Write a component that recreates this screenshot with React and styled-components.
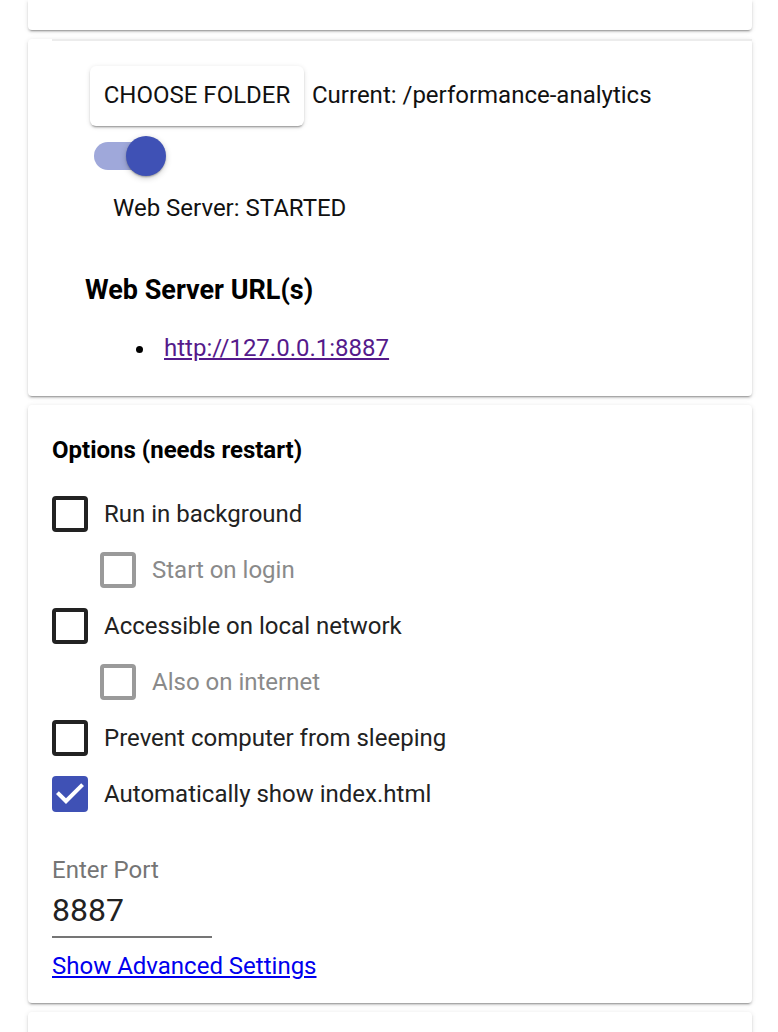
import styled, { createGlobalStyle } from 'styled-components';

const GlobalStyle = createGlobalStyle`
  body {
    margin: 0;
    background: #fff;
    font-family: Roboto, "Liberation Sans", sans-serif;
    color: rgba(0, 0, 0, 0.87);
  }
`;

const Page = styled.div`
  display: flex;
  flex-direction: column;
  gap: 9px;
  padding: 0 26px 0 28px;
  height: 1032px;
  overflow: hidden;
`;

const Card = styled.div`
  flex-shrink: 0;
  background: #fff;
  border-radius: ${p => (p.$cut ? '0 0 4px 4px' : '4px')};
  box-shadow: 0 3px 1px -2px rgba(0, 0, 0, 0.2), 0 2px 2px 0 rgba(0, 0, 0, 0.14),
    0 1px 5px 0 rgba(0, 0, 0, 0.12);
  height: ${p => p.$h || 'auto'};
  box-sizing: border-box;
`;

const ServerCard = styled(Card)`
  padding: 27px 0 0;
  position: relative;
  &::before {
    content: '';
    position: absolute;
    top: 0;
    left: 24px;
    right: 0;
    height: 2px;
    background: #ececec;
  }
`;

const FolderRow = styled.div`
  display: flex;
  align-items: center;
  gap: 8px;
  padding-left: 62px;
`;

const FolderButton = styled.button`
  width: 214px;
  height: 60px;
  padding: 0 0 3px;
  border: none;
  border-radius: 6px;
  background: #fff;
  font-family: inherit;
  font-size: 24px;
  color: #111;
  box-shadow: 0 3px 1px -2px rgba(0, 0, 0, 0.2), 0 2px 2px 0 rgba(0, 0, 0, 0.14),
    0 1px 5px 0 rgba(0, 0, 0, 0.12);
`;

const Plain = styled.span`
  font-size: 24px;
  line-height: 28px;
  margin-top: -3px;
  color: #111;
`;

const SwitchWrap = styled.div`
  position: relative;
  margin: 10px 0 0 66px;
  width: 72px;
  height: 40px;
`;

const Track = styled.div`
  position: absolute;
  left: 0;
  top: 6px;
  width: 64px;
  height: 28px;
  border-radius: 14px;
  background: #9fa8da;
`;

const Thumb = styled.div`
  position: absolute;
  left: 32px;
  top: 0;
  width: 40px;
  height: 40px;
  border-radius: 50%;
  background: #3f51b5;
  box-shadow: 0 2px 2px -1px rgba(0, 0, 0, 0.2), 0 1px 2px 0 rgba(0, 0, 0, 0.14),
    0 2px 6px 0 rgba(0, 0, 0, 0.2);
`;

const Status = styled.div`
  margin-top: 18px;
  padding-left: 85px;
  font-size: 24px;
  line-height: 28px;
  color: #111;
`;

const UrlHeading = styled.h3`
  margin: 52px 0 0;
  padding-left: 57px;
  font-size: 27px;
  line-height: 32px;
  font-weight: 700;
  color: #000;
`;

const UrlList = styled.ul`
  list-style: none;
  margin: 28px 0 0;
  padding-left: 108px;
  font-size: 24px;
  line-height: 28px;
`;

const UrlItem = styled.li`
  display: flex;
  align-items: center;
  gap: 21px;
  &::before {
    content: '';
    width: 7px;
    height: 7px;
    border-radius: 50%;
    background: #000;
    margin-top: 2px;
  }
`;

const UrlLink = styled.a`
  color: #551a8b;
  text-decoration: underline;
`;

const OptionsCard = styled(Card)`
  padding: 31px 24px 0;
`;

const OptionsTitle = styled.div`
  font-size: 24px;
  line-height: 28px;
  font-weight: 700;
  color: #000;
  margin-bottom: 32px;
`;

const CheckList = styled.div`
  display: flex;
  flex-direction: column;
  gap: 20px;
`;

const CheckRow = styled.label`
  display: flex;
  align-items: center;
  gap: 16px;
  padding-left: ${p => (p.$sub ? '48px' : '0')};
  font-size: 24px;
  line-height: 28px;
  color: ${p => (p.$disabled ? '#8a8a8a' : '#222')};
`;

const Box = styled.span`
  width: 36px;
  height: 36px;
  box-sizing: border-box;
  border-radius: 4px;
  border: ${p => (p.$checked ? 'none' : `4px solid ${p.$disabled ? '#9a9a9a' : '#222'}`)};
  background: ${p => (p.$checked ? '#3f51b5' : 'transparent')};
  display: flex;
  align-items: center;
  justify-content: center;
  flex-shrink: 0;
`;

const PortField = styled.div`
  margin-top: 44px;
  width: 160px;
`;

const PortLabel = styled.div`
  font-size: 24px;
  line-height: 28px;
  color: #757575;
`;

const PortValue = styled.div`
  margin-top: 8px;
  font-size: 32px;
  line-height: 36px;
  color: #222;
  padding-bottom: 8px;
  border-bottom: 2px solid #757575;
`;

const AdvancedLink = styled.a`
  display: inline-block;
  margin-top: 14px;
  font-size: 24px;
  line-height: 28px;
  color: #0000ee;
  text-decoration: underline;
`;

function Check({ label, checked, disabled, sub }) {
  return (
    <CheckRow $sub={sub} $disabled={disabled}>
      <Box $checked={checked} $disabled={disabled}>
        {checked && (
          <svg width="36" height="36" viewBox="3 3 18 18">
            <path d="M10 17l-5-5 1.41-1.41L10 14.17l7.59-7.59L19 8l-9 9z" fill="#fff" />
          </svg>
        )}
      </Box>
      {label}
    </CheckRow>
  );
}

export default function App() {
  return (
    <>
      <GlobalStyle />
      <Page>
        <Card $cut $h="30px" />

        <ServerCard $h="357px">
          <FolderRow>
            <FolderButton>CHOOSE FOLDER</FolderButton>
            <Plain>Current: /performance-analytics</Plain>
          </FolderRow>
          <SwitchWrap>
            <Track />
            <Thumb />
          </SwitchWrap>
          <Status>Web Server: STARTED</Status>
          <UrlHeading>Web Server URL(s)</UrlHeading>
          <UrlList>
            <UrlItem>
              <UrlLink href="#">http://127.0.0.1:8887</UrlLink>
            </UrlItem>
          </UrlList>
        </ServerCard>

        <OptionsCard $h="598px">
          <OptionsTitle>Options (needs restart)</OptionsTitle>
          <CheckList>
            <Check label="Run in background" />
            <Check label="Start on login" sub disabled />
            <Check label="Accessible on local network" />
            <Check label="Also on internet" sub disabled />
            <Check label="Prevent computer from sleeping" />
            <Check label="Automatically show index.html" checked />
          </CheckList>
          <PortField>
            <PortLabel>Enter Port</PortLabel>
            <PortValue>8887</PortValue>
          </PortField>
          <AdvancedLink href="#">Show Advanced Settings</AdvancedLink>
        </OptionsCard>

        <Card $h="40px" />
      </Page>
    </>
  );
}
